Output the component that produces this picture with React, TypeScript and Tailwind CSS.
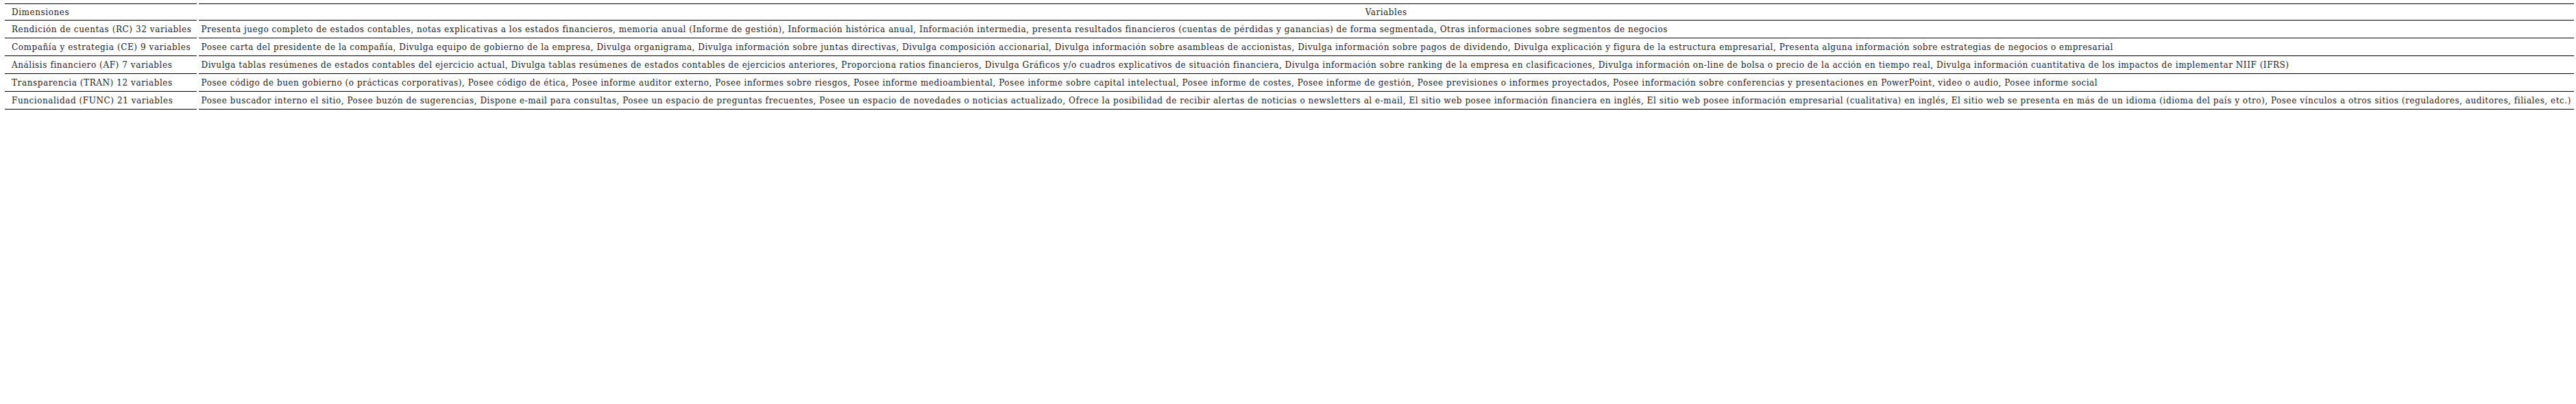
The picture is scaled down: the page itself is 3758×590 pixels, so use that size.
const rows = [
  {
    dim: "Rendición de cuentas (RC) 32 variables",
    vars: "Presenta juego completo de estados contables, notas explicativas a los estados financieros, memoria anual (Informe de gestión), Información histórica anual, Información intermedia, presenta resultados financieros (cuentas de pérdidas y ganancias) de forma segmentada, Otras informaciones sobre segmentos de negocios",
  },
  {
    dim: "Compañía y estrategia (CE) 9 variables",
    vars: "Posee carta del presidente de la compañía, Divulga equipo de gobierno de la empresa, Divulga organigrama, Divulga información sobre juntas directivas, Divulga composición accionarial, Divulga información sobre asambleas de accionistas, Divulga información sobre pagos de dividendo, Divulga explicación y figura de la estructura empresarial, Presenta alguna información sobre estrategias de negocios o empresarial",
  },
  {
    dim: "Análisis financiero (AF) 7 variables",
    vars: "Divulga tablas resúmenes de estados contables del ejercicio actual, Divulga tablas resúmenes de estados contables de ejercicios anteriores, Proporciona ratios financieros, Divulga Gráficos y/o cuadros explicativos de situación financiera, Divulga información sobre ranking de la empresa en clasificaciones, Divulga información on-line de bolsa o precio de la acción en tiempo real, Divulga información cuantitativa de los impactos de implementar NIIF (IFRS)",
  },
  {
    dim: "Transparencia (TRAN) 12 variables",
    vars: "Posee código de buen gobierno (o prácticas corporativas), Posee código de ética, Posee informe auditor externo, Posee informes sobre riesgos, Posee informe medioambiental, Posee informe sobre capital intelectual, Posee informe de costes, Posee informe de gestión, Posee previsiones o informes proyectados, Posee información sobre conferencias y presentaciones en PowerPoint, video o audio, Posee informe social",
  },
  {
    dim: "Funcionalidad (FUNC) 21 variables",
    vars: "Posee buscador interno el sitio, Posee buzón de sugerencias, Dispone e-mail para consultas, Posee un espacio de preguntas frecuentes, Posee un espacio de novedades o noticias actualizado, Ofrece la posibilidad de recibir alertas de noticias o newsletters al e-mail, El sitio web posee información financiera en inglés, El sitio web posee información empresarial (cualitativa) en inglés, El sitio web se presenta en más de un idioma (idioma del país y otro), Posee vínculos a otros sitios (reguladores, auditores, filiales, etc.)",
  },
];

export default function App() {
  return (
    <div className="min-h-[590px] bg-white pt-[5px] pl-[4px] font-['DejaVu_Serif',serif] text-[12px] text-[#222]">
      <table className="border-separate border-spacing-x-[3px] border-spacing-y-0 whitespace-nowrap">
        <thead>
          <tr>
            <th className="h-[25px] border-y border-black pl-[10px] pr-[7px] text-left font-normal tracking-[0.58px]">
              Dimensiones
            </th>
            <th className="h-[25px] border-y border-black px-[4px] text-center font-normal tracking-[0.54px]">
              Variables
            </th>
          </tr>
        </thead>
        <tbody>
          {rows.map((r) => (
            <tr key={r.dim}>
              <td className="h-[26px] border-b border-black pl-[10px] pr-[7px] tracking-[0.58px]">{r.dim}</td>
              <td className="h-[26px] border-b border-black px-[4px] tracking-[0.54px]">{r.vars}</td>
            </tr>
          ))}
        </tbody>
      </table>
    </div>
  );
}
